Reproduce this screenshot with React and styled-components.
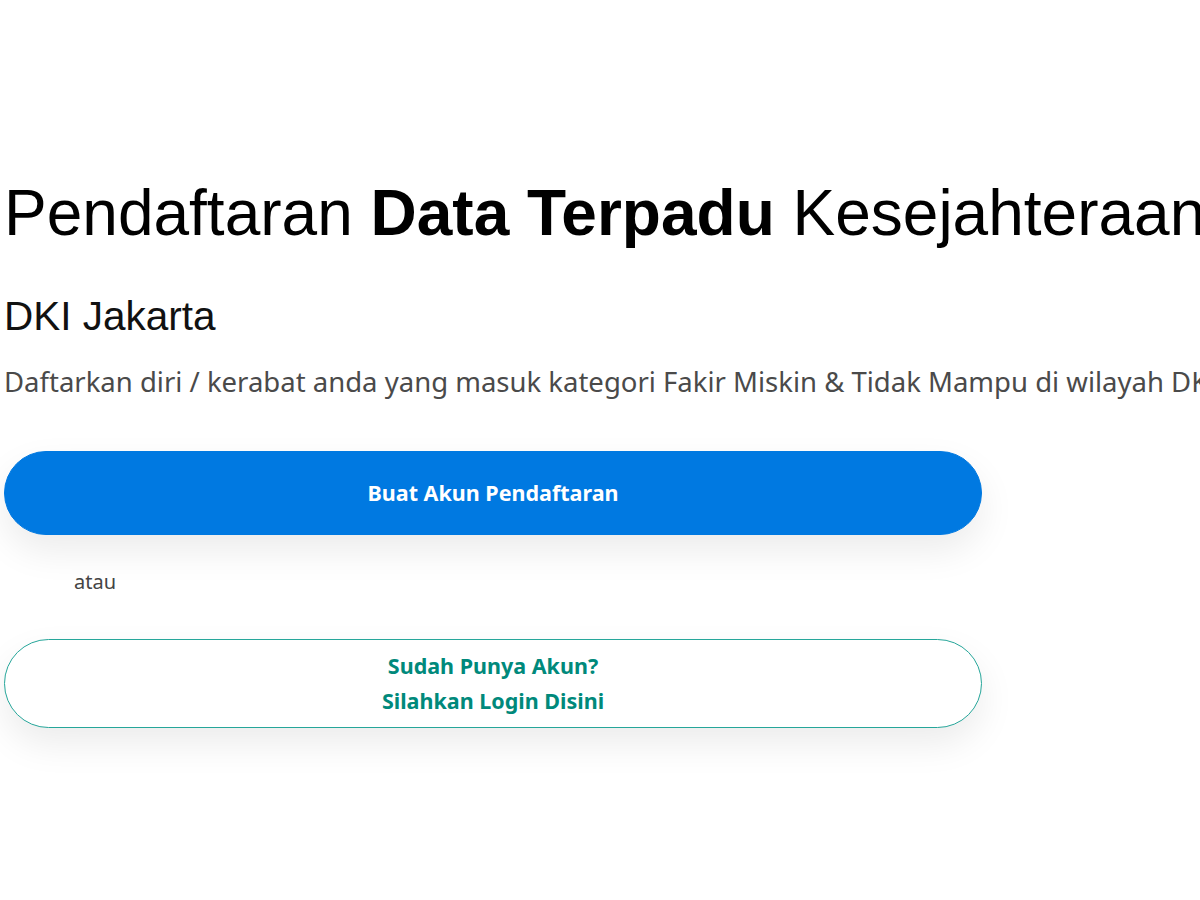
import styled, { createGlobalStyle } from 'styled-components'

const Global = createGlobalStyle`
  html, body {
    margin: 0;
    background: #fff;
    overflow: hidden;
  }
`

const Page = styled.main`
  padding: 175px 0 120px 4px;
  width: 1196px;
  overflow: hidden;
`

const Title = styled.h1`
  margin: 0;
  font-family: "Liberation Sans", Arial, sans-serif;
  font-size: 64px;
  font-weight: 400;
  line-height: 1.2;
  color: #000;
  white-space: nowrap;
  b {
    font-weight: 700;
  }
`

const Region = styled.h2`
  margin: 40px 0 0;
  font-family: "Liberation Sans", Arial, sans-serif;
  font-size: 40.5px;
  font-weight: 400;
  line-height: 1.2;
  color: #111;
`

const Lead = styled.p`
  margin: 23px 0 0;
  font-family: "Noto Sans", sans-serif;
  font-size: 27.5px;
  line-height: 1.4;
  color: #4a4a4a;
  white-space: nowrap;
`

const Actions = styled.div`
  width: 978px;
  margin-top: 49px;
  display: flex;
  flex-direction: column;
`

const Pill = styled.a`
  display: flex;
  flex-direction: column;
  align-items: center;
  justify-content: center;
  box-sizing: border-box;
  height: ${p => (p.outline ? '89px' : '84px')};
  border-radius: 45px;
  font-family: "Noto Sans", sans-serif;
  font-size: 21.5px;
  font-weight: 700;
  line-height: 35px;
  text-decoration: none;
  cursor: pointer;
  background: ${p => (p.outline ? '#fff' : '#0079e1')};
  color: ${p => (p.outline ? '#00897b' : '#fff')};
  border: 1px solid ${p => (p.outline ? '#26a69a' : '#0079e1')};
  box-shadow: 0 16px 36px rgba(0, 0, 0, 0.08);
`

const Or = styled.span`
  margin: 35px 0 45px 70px;
  font-family: "Noto Sans", sans-serif;
  font-size: 20px;
  line-height: 24px;
  color: #444;
`

export default function App() {
  return (
    <>
      <Global />
      <Page>
        <Title>
          Pendaftaran <b>Data Terpadu</b> Kesejahteraan Sosial
        </Title>
        <Region>DKI Jakarta</Region>
        <Lead>
          Daftarkan diri / kerabat anda yang masuk kategori Fakir Miskin &amp; Tidak Mampu di wilayah DKI Jakarta
        </Lead>
        <Actions>
          <Pill>Buat Akun Pendaftaran</Pill>
          <Or>atau</Or>
          <Pill outline>
            <span>Sudah Punya Akun?</span>
            <span>Silahkan Login Disini</span>
          </Pill>
        </Actions>
      </Page>
    </>
  )
}
